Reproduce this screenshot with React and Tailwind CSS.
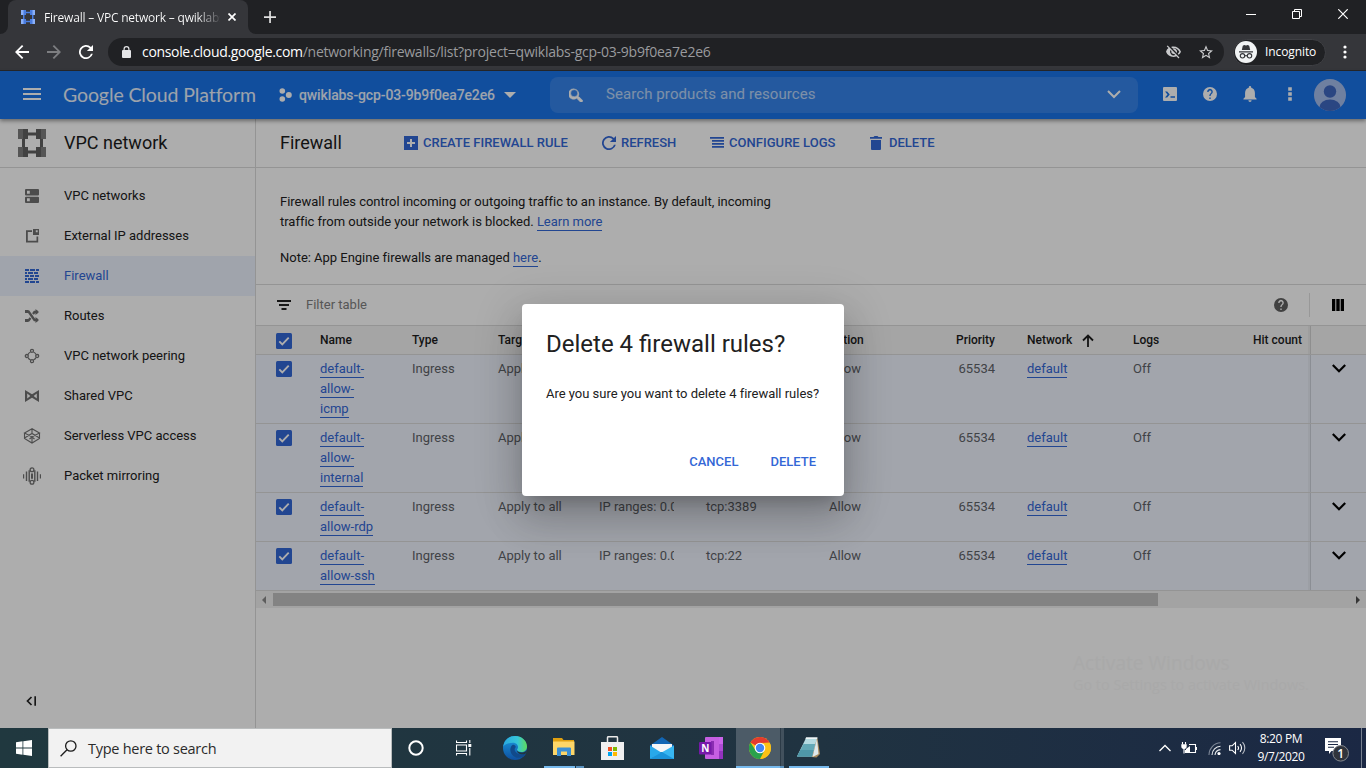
import React from "react";

const seg = "font-['Open_Sans','Noto_Sans',sans-serif]";

const Svg = ({ w, h, children, className = "", vb }) => (
  <svg width={w} height={h ?? w} viewBox={vb ?? `0 0 ${w} ${h ?? w}`} className={`block shrink-0 ${className}`} fill="currentColor">
    {children}
  </svg>
);

/* ---------- browser chrome ---------- */

const VpcMark = ({ size, light, dark, line }) => (
  <Svg w={size} vb="0 0 28 28">
    <path d="M9 3.5h10v3H9zM9 21.500h10v3H9zM4 9h3v10H4zM22 9h3v10h-3z" fill={line} />
    {[[0, 0], [18, 0], [0, 18], [18, 18]].map(([x, y]) => (
      <g key={`${x}-${y}`}>
        <rect x={x} y={y} width="10" height="10" fill={x === 0 ? light : dark} />
        <rect x={x + 5} y={y} width="5" height="10" fill={x === 0 ? dark : light} />
      </g>
    ))}
  </Svg>
);

const TabStrip = () => (
  <div className="flex h-[34px] bg-[#202124]">
    <div className="flex w-2 items-end bg-[#35363a]"><div className="h-full w-2 rounded-br-lg bg-[#202124]" /></div>
    <div className="flex h-[34px] w-[240px] items-center rounded-t-lg bg-[#35363a] pl-[13px]">
      <VpcMark size={14} light="#8ab0f8" dark="#4a7de0" line="#4a7de0" />
      <div className={`ml-[9px] mt-px w-[176px] overflow-hidden whitespace-nowrap bg-linear-to-r from-white from-87% to-[#45464a] bg-clip-text text-[12px] leading-4 tracking-[-0.2px] text-transparent ${seg}`}>
        Firewall – VPC network – qwiklabs
      </div>
      <Svg w={8} className="ml-2 text-white"><path d="M.5.5l7 7M7.500.5l-7 7" stroke="currentColor" strokeWidth="1.700" /></Svg>
    </div>
    <div className="w-2 bg-[#35363a]"><div className="h-full w-2 rounded-bl-lg bg-[#202124]" /></div>
    <Svg w={12} className="ml-2 mt-[11px] text-[#e0e0e0]"><path d="M5.200 0h1.700v12H5.200zM0 5.200h12v1.700H0z" /></Svg>
    <div className="ml-auto flex items-start pt-[9px] text-white">
      <Svg w={10} className="mr-9"><path d="M0 5h10v1H0z" /></Svg>
      <Svg w={10} className="mr-9"><path d="M.5 2.500h7v7h-7zM2.500 2.500v-2h7v7h-2" fill="none" stroke="currentColor" /></Svg>
      <Svg w={10} className="mr-[18px]"><path d="M.3.300l9.400 9.400M9.700.300L.3 9.700" stroke="currentColor" strokeWidth="1.200" /></Svg>
    </div>
  </div>
);

const AddressBar = () => (
  <div className="flex h-[37px] items-center border-b border-[#26272a] bg-[#35363a] text-white">
    <Svg w={14} className="ml-[15px]"><path d="M14 6.100H3.500l4.800-4.800L7 0 0 7l7 7 1.300-1.300-4.800-4.800H14z" /></Svg>
    <Svg w={14} className="ml-[18px] text-[#7d7e81]"><path d="M0 6.100h10.500L5.700 1.300 7 0l7 7-7 7-1.300-1.300 4.800-4.800H0z" /></Svg>
    <Svg w={14} className="ml-[18px]"><path d="M11.950 2.050A7 7 0 1 0 13.800 8.700H12A5.250 5.250 0 1 1 10.700 3.300L7.900 6.100H14V0z" /></Svg>
    <div className="ml-[15px] flex h-7 w-[1116px] items-center rounded-full bg-[#202124]">
      <Svg w={9} h={12} className="ml-[14px] text-[#e4e5e7]"><path fillRule="evenodd" d="M1.500 4V3a3 3 0 0 1 6 0v1H8a1 1 0 0 1 1 1v6a1 1 0 0 1-1 1H1a1 1 0 0 1-1-1V5a1 1 0 0 1 1-1zM2.700 4h3.600V3a1.800 1.800 0 0 0-3.600 0z" /></Svg>
      <div className={`ml-[11px] whitespace-nowrap text-[14px] leading-5 text-[#9a9b9e] ${seg}`}>
        <span className="tracking-[-0.33px] text-white">console.cloud.google.com</span>
        <span className="tracking-[-0.25px]">/networking/firewalls/list?project=qwiklabs-gcp-03-9b9f0ea7e2e6</span>
      </div>
      <Svg w={15} h={14} vb="0 0 24 22" className="ml-auto text-[#c9cacc]">
        <path d="M12 4.500c4 0 7.500 2.300 9.300 6a10 10 0 0 1-2.600 3.300l1.500 1.500A12 12 0 0 0 24 10.500C22 5.500 17.500 2.200 12 2.200c-1.400 0-2.700.2-3.900.6l1.900 1.900c.6-.1 1.300-.2 2-.2zM1.200 1.900L4 4.700A12 12 0 0 0 0 10.500c2 5 6.500 8.300 12 8.300 1.600 0 3.200-.3 4.700-.9l3.300 3.300 1.500-1.500L2.700.4zM7 7.700l1.700 1.700-.2 1.100A3.600 3.600 0 0 0 13.200 14l1.700 1.700A5.900 5.900 0 0 1 7 7.700zM12 4.900a5.800 5.800 0 0 1 5.500 7.600l-3.500-3.500-1.700-1.700-2.100-2.100A6 6 0 0 1 12 4.900z" />
      </Svg>
      <Svg w={14} vb="2 2 20 19" className="ml-[18px] mr-[11px] text-[#c9cacc]">
        <path d="M22 9.240l-7.190-.62L12 2 9.190 8.630 2 9.240l5.460 4.730L5.820 21 12 17.270 18.180 21l-1.630-7.030L22 9.240zM12 15.400l-3.760 2.270 1-4.280-3.320-2.880 4.380-.38L12 6.100l1.710 4.040 4.380.38-3.320 2.880 1 4.280L12 15.400z" />
      </Svg>
    </div>
    <div className="ml-[9px] flex h-[27px] w-[93px] items-center rounded-full border border-[#3f4044] bg-[#202124]">
      <Svg w={22} className="ml-px">
        <circle cx="11" cy="11" r="11" fill="#f1f3f4" />
        <path d="M7.800 4.800L9.200 4l1.800.5 1.800-.5 1.400.8 1 4.200H6.800zM4 10.200h14v1.300H4z" fill="#35363a" />
        <g fill="none" stroke="#35363a" strokeWidth="1.100"><circle cx="7.500" cy="14.800" r="2.200" /><circle cx="14.500" cy="14.800" r="2.200" /><path d="M9.700 14.700h2.600" /></g>
      </Svg>
      <span className={`ml-2 text-[12px] leading-4 tracking-[-0.1px] ${seg}`}>Incognito</span>
    </div>
    <Svg w={4} h={14} className="ml-[17px]"><circle cx="2" cy="2" r="1.600" /><circle cx="2" cy="7" r="1.600" /><circle cx="2" cy="12" r="1.600" /></Svg>
  </div>
);

/* ---------- console ---------- */

const ConsoleHeader = () => (
  <header className="relative flex h-12 shrink-0 items-center bg-[#1a73e8] text-white shadow-[0_2px_4px_rgba(0,0,0,0.4)]">
    <Svg w={18} h={12} className="ml-[23px] -mt-[3px]"><path d="M0 0h18v2H0zM0 5h18v2H0zM0 10h18v2H0z" /></Svg>
    <span className="ml-[22px] w-[216px] whitespace-nowrap font-['Lato',sans-serif] text-[19.5px] leading-6 tracking-[-0.11px] text-white/90">Google Cloud Platform</span>
    <Svg w={13} h={14}><circle cx="3.300" cy="3" r="2.800" /><circle cx="3.300" cy="11" r="2.800" /><circle cx="9.800" cy="7" r="3" /></Svg>
    <span className="ml-[7px] w-[205px] whitespace-nowrap text-[14px] font-medium leading-5 tracking-[-0.12px] text-white/90">qwiklabs-gcp-03-9b9f0ea7e2e6</span>
    <Svg w={12} h={6}><path d="M0 0h12L6 6z" /></Svg>
    <div className="ml-[34px] -mt-px flex h-9 w-[588px] items-center rounded-lg bg-white/12">
      <Svg w={14} vb="3 3 17.500 17.500" className="ml-[19px] mt-px"><path stroke="currentColor" strokeWidth=".7" d="M15.500 14h-.79l-.28-.27A6.500 6.500 0 1 0 13 15.500l.27.280v.79l5 4.990L20.490 19l-4.990-5zm-6 0a4.500 4.500 0 1 1 0-9 4.500 4.500 0 0 1 0 9z" /></Svg>
      <span className="-mt-0.5 ml-[23px] whitespace-nowrap text-[15px] leading-5 tracking-[0.08px] text-white/65">Search products and resources</span>
      <Svg w={14} h={9} className="ml-auto mr-[17px]"><path d="M1 1l6 6 6-6" fill="none" stroke="currentColor" strokeWidth="2" /></Svg>
    </div>
    <Svg w={14} className="ml-[25px] -mt-0.5"><path fillRule="evenodd" d="M1 0h12a1 1 0 0 1 1 1v12a1 1 0 0 1-1 1H1a1 1 0 0 1-1-1V1a1 1 0 0 1 1-1zM2 4.500L4.500 7.500 2 10.500h2.200l2.500-3-2.500-3zM7.500 9.300v1.500H12V9.300z" /></Svg>
    <Svg w={14} vb="2 2 20 20" className="ml-[26px] -mt-0.5"><path d="M12 2a10 10 0 1 0 0 20 10 10 0 0 0 0-20zm1 17h-2v-2h2v2zm2.070-7.750l-.9.920C13.450 12.900 13 13.500 13 15h-2v-.5c0-1.100.45-2.100 1.170-2.830l1.240-1.260A2 2 0 1 0 10 9H8a4 4 0 1 1 7.070 2.250z" /></Svg>
    <Svg w={14} h={16} vb="4 2.500 16 19.500" className="ml-[26px] -mt-0.5"><path d="M12 22a2 2 0 0 0 2-2h-4a2 2 0 0 0 2 2zm6-6v-5c0-3.070-1.640-5.640-4.500-6.320V4a1.500 1.500 0 0 0-3 0v.68C7.630 5.360 6 7.920 6 11v5l-2 2v1h16v-1l-2-2z" /></Svg>
    <Svg w={4} h={14} className="ml-[31px] -mt-0.5"><path d="M.2.200h3.600v3.600H.2zM.2 5.200h3.600v3.600H.2zM.2 10.200h3.600v3.600H.2z" /></Svg>
    <Svg w={32} className="ml-[22px]">
      <defs><clipPath id="avatar"><circle cx="16" cy="16" r="16" /></clipPath></defs>
      <g clipPath="url(#avatar)"><rect width="32" height="32" fill="#a4bdec" /><circle cx="16" cy="12.500" r="6.200" fill="#3f67c0" /><ellipse cx="16" cy="28" rx="10.500" ry="7.500" fill="#3f67c0" /></g>
    </Svg>
  </header>
);

const navIcons = {
  networks: <path fillRule="evenodd" d="M1 0h12a1 1 0 0 1 1 1v4.500a1 1 0 0 1-1 1H1a1 1 0 0 1-1-1V1a1 1 0 0 1 1-1zM1 7.700h12a1 1 0 0 1 1 1V13a1 1 0 0 1-1 1H1a1 1 0 0 1-1-1V8.700a1 1 0 0 1 1-1zM2 1.700v3h2.800v-3zM2 9.300v3h2.800v-3z" />,
  external: <path fillRule="evenodd" d="M1 1.200h6v1.700H2.800v8.900h8.700V7.500h1.700v6H1zM8 0h6v6H8zM10.800 1.300v1.900h1.900V1.300z" />,
  firewall: <path d="M0 0h4v2H0zM5 0h5v2H5zM11 0h3v2h-3zM0 3h2v2H0zM3 3h5v2H3zM9 3h4v2H9zM0 6h4v2H0zM5 6h4v2H5zM10 6h4v2h-4zM0 9h2v2H0zM3 9h5v2H3zM9 9h4v2H9zM0 12h4v2H0zM5 12h5v2H5zM11 12h3v2h-3z" />,
  routes: <g><path d="M1 2.500h2.500L9.500 11H13M1 11.500h2.500L5.500 9M8 5l1.500-2H13" fill="none" stroke="currentColor" strokeWidth="2.300" /><path d="M10.500 0L14 3l-3.500 3zM10.500 8l3.500 3-3.500 3zM0 1h3v3H0zM0 10h3v3H0z" /></g>,
  peering: <g fill="none" stroke="currentColor" strokeWidth="1.300"><circle cx="7" cy="1.800" r="1.500" /><circle cx="7" cy="12.200" r="1.500" /><circle cx="1.800" cy="7" r="1.500" /><circle cx="12.200" cy="7" r="1.500" /><path d="M5.600 3A4.500 4.500 0 0 0 3 5.600M8.400 3A4.500 4.500 0 0 1 11 5.600M5.600 11A4.500 4.500 0 0 1 3 8.400M8.400 11A4.500 4.500 0 0 0 11 8.400" /></g>,
  shared: <path fillRule="evenodd" d="M0 1l7 4.300L14 1v12l-7-4.300L0 13zM2.200 4.600v4.800L5.300 7zM11.800 4.600v4.800L8.700 7z" />,
  serverless: <g fill="none" stroke="currentColor" strokeWidth="1.100"><path d="M7-.3L-.5 4 7 8l7.500-4zM-.5 4v5.500L7 14l7.500-4.500V4M-.5 9L7 4.500 14.500 9M7 0v4.500M7 7.500V14M4.500 10L7 8l2.500 2" /></g>,
  mirroring: <g><path d="M-2 5.200h1.200v4.200H-2zM.8 2.500H2.200V12H.8zM3.500 1.200h1.400v11.600H3.500zM9.100 1.200h1.400v11.600H9.100zM11.800 2.500h1.400V12h-1.400zM14.800 5.200H16v4.200h-1.200z" /><rect x="6" y="4.300" width="2" height="5.800" rx="1" /><g fill="none" stroke="currentColor" strokeWidth="1.300"><circle cx="7" cy=".8" r="1.900" /><circle cx="7" cy="13.200" r="1.900" /></g></g>,
};

const nav = [
  ["networks", "VPC networks"],
  ["external", "External IP addresses"],
  ["firewall", "Firewall"],
  ["routes", "Routes"],
  ["peering", "VPC network peering"],
  ["shared", "Shared VPC"],
  ["serverless", "Serverless VPC access"],
  ["mirroring", "Packet mirroring"],
];

const Sidebar = () => (
  <aside className="flex w-64 shrink-0 flex-col border-r border-[#dadada]">
    <div className="flex h-[49px] items-center border-b border-[#dadada] pl-[18px]">
      <VpcMark size={28} light="#7e7e7e" dark="#616161" line="#616161" />
      <span className="ml-[18px] text-[18px] leading-6 text-[#1c1c1c]">VPC network</span>
    </div>
    <nav className="pt-2">
      {nav.map(([icon, label]) => (
        <div key={label} className={`flex h-10 items-center pl-[25px] text-[13px] ${icon === "firewall" ? "bg-[#ecf2fe] text-[#3367d6]" : "text-[#212121]"}`}>
          <Svg w={14} className={`overflow-visible ${icon === "firewall" ? "" : "text-[#717171]"}`}>{navIcons[icon]}</Svg>
          <span className="ml-[25px] leading-5">{label}</span>
        </div>
      ))}
    </nav>
    <Svg w={10} h={10} className="mb-[22px] ml-[26px] mt-auto text-[#212121]"><path d="M5.500 1L1.500 5l4 4M9.200.300v9.400" fill="none" stroke="currentColor" strokeWidth="1.700" /></Svg>
  </aside>
);

const Link = ({ children }) => <span className="border-b border-[#3367d6] pb-px text-[#3367d6]">{children}</span>;

const Toolbar = () => (
  <div className="flex h-[49px] shrink-0 items-center border-b border-[#dadada] pl-6">
    <span className="w-[124px] text-[18px] leading-6 text-[#1c1c1c]">Firewall</span>
    <div className="flex items-center text-[13px] font-medium leading-5 text-[#3367d6]">
      <div className="flex w-[198px] items-center gap-[5px]">
        <Svg w={14}><path fillRule="evenodd" d="M0 0h14v14H0zM6 3v3H3v2h3v3h2V8h3V6H8V3z" /></Svg><span className="whitespace-nowrap">CREATE FIREWALL RULE</span>
      </div>
      <div className="flex w-[108px] items-center gap-[5px]">
        <Svg w={14}><path d="M11.950 2.050A7 7 0 1 0 13.800 8.700H12A5.250 5.250 0 1 1 10.700 3.300L7.900 6.100H14V0z" /></Svg><span>REFRESH</span>
      </div>
      <div className="flex w-[160px] items-center gap-[5px]">
        <Svg w={14}><path d="M0 1h14v1.800H0zM2 4h12v1.800H2zM2 7h12v1.800H2zM2 10h12v1.800H2z" /></Svg><span className="whitespace-nowrap tracking-[0.04px]">CONFIGURE LOGS</span>
      </div>
      <div className="flex items-center gap-[7px]">
        <Svg w={12} h={14}><path d="M1 4h10v9a1 1 0 0 1-1 1H2a1 1 0 0 1-1-1zM0 1h3.500l1-1h3l1 1H12v1.700H0z" /></Svg><span>DELETE</span>
      </div>
    </div>
  </div>
);

const Check = () => (
  <Svg w={16}><rect width="16" height="16" rx="1.500" fill="#3367d6" /><path d="M3.300 8.300l3 3 6.400-6.600" fill="none" stroke="#fff" strokeWidth="1.900" /></Svg>
);

const cols = "grid grid-cols-[64px_92px_86px_101px_107px_123px_67px_131px_106px_80px_97px_56px]";

const rows = [
  { name: ["default-", "allow-", "icmp"], proto: "icmp", h: "h-[69px]" },
  { name: ["default-", "allow-", "internal"], proto: "all", h: "h-[69px]" },
  { name: ["default-", "allow-rdp"], proto: "tcp:3389", h: "h-[49px]" },
  { name: ["default-", "allow-ssh"], proto: "tcp:22", h: "h-[49px]" },
];

const Table = () => (
  <div className="text-[13px] leading-5">
    <div className={`${cols} h-[29px] items-center border-b border-[#dadada] bg-[#f3f3f3] text-[12px] font-medium text-[#1c1c1c]`}>
      <div className="pl-5 pt-0.5"><Check /></div>
      <span>Name</span><span>Type</span><span>Targets</span><span>Filters</span>
      <span>Protocols</span><span>Action</span>
      <span className="pr-8 text-right">Priority</span>
      <span className="flex items-center gap-2.5">Network
        <Svg w={12} h={13}><path d="M6 13V1.500M1 6.500l5-5 5 5" fill="none" stroke="currentColor" strokeWidth="1.800" /></Svg>
      </span>
      <span>Logs</span>
      <div className="flex h-[28px] items-center justify-end whitespace-nowrap border-r-2 border-[#e9e9e9] pr-1.5">Hit count</div>
      <div className="h-[28px] border-l border-[#d2d2d2]" />
    </div>
    {rows.map((r) => (
      <div key={r.proto} className={`${cols} ${r.h} border-b border-[#dadada] bg-[#eff3fe] text-[#5f6368]`}>
        <div className="pl-5 pt-1.5"><Check /></div>
        <div className="pt-1">{r.name.map((n) => <div key={n}><Link>{n}</Link></div>)}</div>
        <span className="pt-1">Ingress</span>
        <span className="pt-1">Apply to all</span>
        <span className="mr-[32px] overflow-hidden whitespace-nowrap pt-1">IP ranges: 0.0.0.0/0</span>
        <span className="pt-1">{r.proto}</span>
        <span className="pt-1">Allow</span>
        <span className="pr-8 pt-1 text-right">65534</span>
        <div className="pt-1"><Link>default</Link></div>
        <span className="pt-1">Off</span>
        <div className="border-r-2 border-[#e6eaf4]" />
        <div className="flex justify-center border-l border-[#cdd1da] pt-[9px] text-black">
          <Svg w={14} h={9}><path d="M.8 1L7 7.200 13.200 1" fill="none" stroke="currentColor" strokeWidth="2.200" /></Svg>
        </div>
      </div>
    ))}
    <div className="flex h-[17px] items-center bg-[#f1f1f1] text-[#505050]">
      <Svg w={17} h={8} className="text-[#8a8a8a]"><path d="M10 0v8L6 4z" /></Svg>
      <div className="h-[13px] w-[885px] bg-[#c1c1c1]" />
      <Svg w={17} h={8} className="ml-auto"><path d="M7 0v8l4-4z" /></Svg>
    </div>
  </div>
);

const Main = () => (
  <main className="flex w-[1110px] flex-col">
    <Toolbar />
    <div className="h-[117px] shrink-0 border-b border-[#dadada] pl-6 pt-6 text-[13px] leading-5 tracking-[-0.02px] text-[#212121]">
      <p className="whitespace-nowrap">Firewall rules control incoming or outgoing traffic to an instance. By default, incoming<br />traffic from outside your network is blocked. <Link>Learn more</Link></p>
      <p className="mt-4">Note: App Engine firewalls are managed <Link>here</Link>.</p>
    </div>
    <div className="flex h-[41px] shrink-0 items-center border-b border-[#dadada] pl-[21px] text-[13px] text-[#808080]">
      <Svg w={14} h={10} className="text-[#212121]"><path d="M0 0h14v1.900H0zM2 4h10v1.900H2zM4.500 8h5v1.900h-5z" /></Svg>
      <span className="ml-[15px]">Filter table</span>
      <Svg w={14} vb="2 2 20 20" className="ml-auto -mt-px text-[#606060]"><path d="M12 2a10 10 0 1 0 0 20 10 10 0 0 0 0-20zm1 17h-2v-2h2v2zm2.070-7.750l-.9.920C13.450 12.900 13 13.500 13 15h-2v-.5c0-1.100.45-2.100 1.170-2.830l1.240-1.260A2 2 0 1 0 10 9H8a4 4 0 1 1 7.070 2.250z" /></Svg>
      <div className="ml-[21px] h-6 w-px bg-[#e0e0e0]" />
      <Svg w={12} className="-mt-px ml-[22px] mr-[22px] text-black"><path d="M0 0h3.300v12H0zM4.300 0h3.400v12H4.300zM8.700 0H12v12H8.700z" /></Svg>
    </div>
    <Table />
    <div className={`ml-auto mr-[56px] mt-[43px] w-[237px] ${seg}`}>
      <div className="text-[19.1px] leading-6 text-[#f9f9f9]">Activate Windows</div>
      <div className="whitespace-nowrap text-[14.4px] leading-5 text-[#fafafa]">Go to Settings to activate Windows.</div>
    </div>
  </main>
);

const Dialog = () => (
  <div className="h-48 w-[322px] rounded bg-white px-6 shadow-[0_11px_15px_-7px_rgba(0,0,0,0.2),0_24px_38px_3px_rgba(0,0,0,0.14),0_9px_46px_8px_rgba(0,0,0,0.12)]">
    <h2 className="whitespace-nowrap pt-6 text-[24px] leading-8 text-[#212121]">Delete 4 firewall rules?</h2>
    <p className="mt-6 whitespace-nowrap text-[13px] leading-5 tracking-[-0.02px] text-[#212121]">Are you sure you want to delete 4 firewall rules?</p>
    <div className="mt-12 flex justify-end gap-8 pr-1 text-[13px] font-medium leading-5 text-[#3367d6]">
      <span>CANCEL</span><span>DELETE</span>
    </div>
  </div>
);

/* ---------- Windows taskbar ---------- */

const Taskbar = () => (
  <div className={`flex h-10 items-center bg-linear-to-r from-[#20383f] via-[#203341] via-60% to-[#1b2844] text-white ${seg}`}>
    <Svg w={16} className="mx-4"><path d="M0 2.200L6.500 1.300V7.600H0zM7.300 1.200L16 0v7.600H7.300zM0 8.400h6.500v6.300L0 13.800zM7.300 8.400H16V16l-8.700-1.200z" /></Svg>
    <div className="flex h-10 w-[344px] items-center border border-[#b9bcbd] bg-[#f2f2f2] text-[#2b2b2b]">
      <Svg w={17} className="ml-[11px]"><g fill="none" stroke="#1c1c1c" strokeWidth="1.300"><circle cx="10.800" cy="6" r="5.200" /><path d="M7 9.800L.6 16.300" /></g></Svg>
      <span className="ml-[11px] mt-0.5 text-[14.500px] leading-5 tracking-[-0.27px]">Type here to search</span>
    </div>
    <div className="flex w-12 justify-center"><Svg w={16}><circle cx="8" cy="8" r="6.700" fill="none" stroke="#fff" strokeWidth="2" /></Svg></div>
    <div className="flex w-12 justify-center">
      <Svg w={16}><g fill="none" stroke="#fff" strokeWidth="1.100"><path d="M.5.500v2h10v-2M.5 5h10v6H.5zM.5 15.500v-2h10v2M13.800 0v3M13.800 8v7.500" /></g><path d="M12.300 4h3v3h-3z" /></Svg>
    </div>
    <div className="flex w-14 justify-center pr-0.5">
      <Svg w={24}>
        <defs>
          <linearGradient id="edgeTop" x1="0" x2="1"><stop offset="0" stopColor="#2aa8e0" /><stop offset=".6" stopColor="#36c6d8" /><stop offset="1" stopColor="#5fdc5a" /></linearGradient>
          <linearGradient id="edgeLow" x1="0" x2="0" y1="0" y2="1"><stop offset="0" stopColor="#1b9de2" /><stop offset="1" stopColor="#0f4f9e" /></linearGradient>
        </defs>
        <circle cx="12" cy="12" r="12" fill="url(#edgeLow)" />
        <path d="M.2 10.500C1.200 4 6 0 12 0c7 0 12 5 12 10.500 0 3.500-2.500 5.500-5.500 5.500-2.500 0-4.500-1-4.500-2 0-.8 1-1.200 1-3 0-2-2-4.200-5-4.200-4.500 0-7.800 1.200-9.800 3.700z" fill="url(#edgeTop)" />
        <path d="M9.500 9C7 11 6.500 15 9 18.500c3 4 8.500 4.500 12.800 1 .5-.6 1.200-1.700.6-1.900-4 1.600-8.900.6-10.400-2.600-.8-1.700-.1-3 .9-4C12 9 10.500 8.300 9.500 9z" fill="#114a8b" />
        <path d="M14 14c.5 1.500 3 3 6.500 2.200 1.300-.3 2.500-1.200 3.500-2.500 0 2-.6 3-1.600 4-4 1.600-8.400.3-8.400-3.700z" fill="#203541" />
      </Svg>
    </div>
    <div className="flex h-10 w-12 flex-col">
      <Svg w={22} h={19} className="ml-[9px] mt-[10px]"><path d="M0 0h9l1.500 2H21v5H0z" fill="#e0a010" /><path d="M0 3.500h21.500V17H0z" fill="#fdd668" /><path d="M4 18v-7.500a1 1 0 0 1 1-1h12a1 1 0 0 1 1 1V18h-4v-4.500H8V18z" fill="#3b8fd4" /></Svg>
      <div className="mt-auto flex h-0.5 w-10"><div className="w-[31px] bg-[#76b9ed]" /><div className="ml-px w-2 bg-[#5a92bf]" /></div>
    </div>
    <div className="flex w-12 justify-center pr-[7px]">
      <Svg w={23} h={24}><path d="M6.500 7V1.700a1 1 0 0 1 1-1h8a1 1 0 0 1 1 1V7" fill="none" stroke="#e9e9e9" strokeWidth="1.500" /><path d="M0 6h23v18H0z" fill="#f0f0f0" /><path d="M7 11h4v4H7z" fill="#f25022" /><path d="M12 11h4v4h-4z" fill="#7fba00" /><path d="M7 16h4v4H7z" fill="#00a4ef" /><path d="M12 16h4v4h-4z" fill="#ffb900" /></Svg>
    </div>
    <div className="flex w-12 justify-center pr-1">
      <Svg w={24} h={22}><path d="M0 8.500L12 0l12 8.500V14H0z" fill="#1266b4" /><path d="M2 7h20v8H2z" fill="#f4f6f8" /><path d="M0 8.500l12 7.500L0 22z" fill="#28a8ea" /><path d="M24 8.500V22H0z" fill="#38b6f1" /><path d="M0 22l12-7 12 7z" fill="#1b93da" /></Svg>
    </div>
    <div className="flex w-12 justify-center pr-0.5">
      <Svg w={24} h={22}><rect x="6" width="18" height="22" rx="1" fill="#c55fe2" /><path d="M20 0h4v7h-4z" fill="#ca64ea" /><path d="M20 7h4v7h-4z" fill="#ae4bd5" /><path d="M20 14h4v8h-4z" fill="#9332bf" /><path d="M12 4h3v14h-3z" fill="#8a2db2" /><rect y="5" width="12.500" height="12.500" rx="1" fill="#7719aa" /><text x="6.200" y="14.700" textAnchor="middle" fontSize="10" fontWeight="700" fill="#fff" fontFamily="Open Sans">N</text></Svg>
    </div>
    <div className="flex h-10 w-12 flex-wrap content-between">
      <div className="flex h-[38px] w-11 items-center justify-center bg-[#4c5b67] pl-1 pt-0.5">
        <Svg w={22} vb="-11 -11 22 22">
          <circle r="11" fill="#fbc116" />
          <path d="M0 0L-9.530 -5.500A11 11 0 0 1 9.530 -5.500L0 -5z" fill="#e33b2e" />
          <path d="M0 -5H9.800A11 11 0 0 1 0 11L4.330 2.500z" fill="#fbc116" />
          <path d="M-9.530 -5.500A11 11 0 0 0 0 11L4.330 2.500-4.330 2.500z" fill="#2aa14c" />
          <circle r="5.300" fill="#fff" /><circle r="4.200" fill="#4285f4" />
        </Svg>
      </div>
      <div className="h-[38px] w-px bg-[#2c3b47]" /><div className="h-[38px] w-[3px] bg-[#42515d]" />
      <div className="h-0.5 w-11 bg-[#76b9ed]" /><div className="h-0.5 w-1 bg-[#5a92bf]" />
    </div>
    <div className="flex h-10 w-12 flex-col pl-[5px]">
      <Svg w={23} h={21} className="ml-2 mt-[9px]"><path d="M19 1l1.500.5L23 17l-3.500 3.500-5-.5z" fill="#a98a5c" /><path d="M9 1h11l-5 18.500H0z" fill="#b4dae1" /><path d="M6.500 7h11.800L15 19.500H0z" fill="#63a8b6" /><path d="M3.500 13h13.200L15 19.500H0z" fill="#4f97a8" /><path d="M20 1.500L21.500 17l-6 3z" fill="#dfe9ec" /><path d="M9 .3h11.500l-.3 1.800H8.500z" fill="#eef6f7" /></Svg>
      <div className="mt-auto h-0.5 w-10 bg-[#76b9ed]" />
    </div>
    <Svg w={12} h={8} className="ml-auto"><path d="M.5 7L6 1.500 11.500 7" fill="none" stroke="#fff" strokeWidth="1.300" /></Svg>
    <Svg w={16} h={12} className="ml-2.5"><g fill="none" stroke="#fff" strokeWidth="1.100"><path d="M8 2.500h6.500v8H4.500V8M1.500 0v2.500M4.500 0v2.500M3 6v5.500" /></g><path d="M.3 2.300h5.400v2A2.700 2.700 0 0 1 .3 4.300zM5 7l4-3v6H5zM14.500 5H16v3h-1.500z" /></Svg>
    <Svg w={13} className="ml-[11px]"><g fill="none" strokeWidth="1.100"><path d="M1 13A12 12 0 0 1 12.500.8" stroke="#7c8696" /><path d="M4 13a9 9 0 0 1 8.500-8.800M7 13a6 6 0 0 1 5.500-5.400" stroke="#e4e7ea" /></g><circle cx="11" cy="11.500" r="1.600" /></Svg>
    <Svg w={17} h={14} className="ml-[8px]"><g fill="none" stroke="#fff" strokeWidth="1.100"><path d="M.6 4.800h2.500L6.500 1.500v11L3.100 9.200H.6z" /><path d="M8.700 5a3 3 0 0 1 0 4M11 3.200a5.500 5.500 0 0 1 0 7.600" /><path d="M13.500 1.200a8.500 8.500 0 0 1 0 11.600" opacity=".7" /></g></Svg>
    <div className="ml-[3px] w-[64px] text-center text-[12px] leading-[18px] tracking-[-0.35px]"><div>8:20 PM</div><div>9/7/2020</div></div>
    <Svg w={24} h={24} className="ml-3 mt-1"><path d="M0 0h16v13H6.500L4 16v-3H0z" /><path d="M3 3.300h10v1H3zM3 6h10v1H3zM3 8.700h6v1H3z" fill="#1b2844" /><circle cx="15.700" cy="15.300" r="7.800" fill="#30343c" stroke="#85898f" /><text x="15.700" y="19.700" textAnchor="middle" fontSize="12" fontWeight="600" fontFamily="Open Sans">1</text></Svg>
    <div className="ml-3 mr-1 h-10 w-px bg-[#77808f]" />
  </div>
);

export default function App() {
  return (
    <div className="flex h-[768px] w-[1366px] flex-col overflow-hidden font-['Roboto',sans-serif]">
      <TabStrip />
      <AddressBar />
      <div className="relative flex h-[657px] flex-col bg-white">
        <ConsoleHeader />
        <div className="flex min-h-0 grow"><Sidebar /><Main /></div>
        <div className="absolute inset-0 flex justify-center bg-black/32 pt-[233px]"><Dialog /></div>
      </div>
      <Taskbar />
    </div>
  );
}
